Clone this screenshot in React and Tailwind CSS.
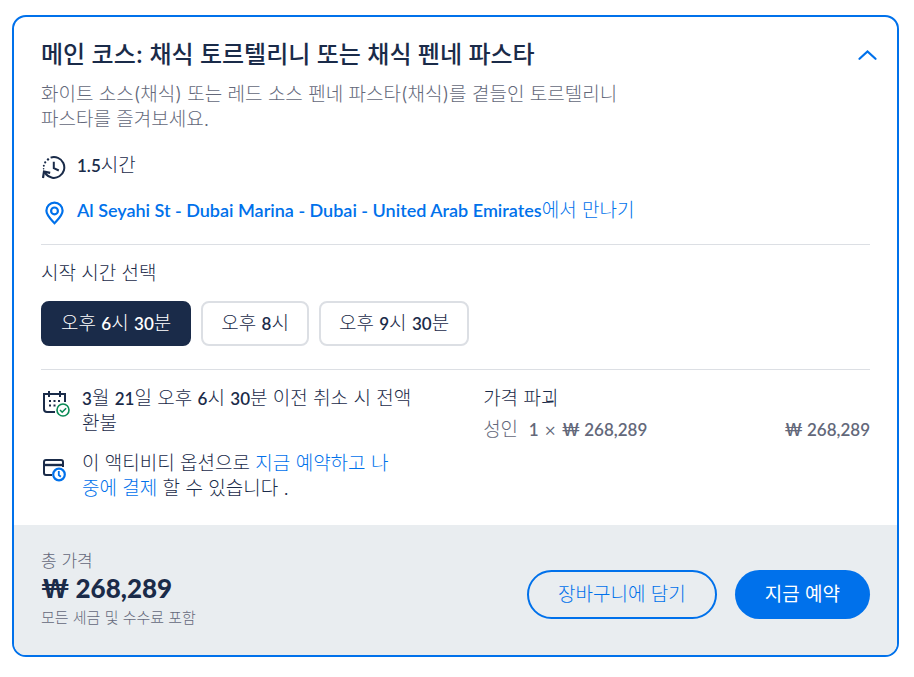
import React, { useState } from "react";

const startTimes = [
  { id: "1830", parts: ["오후 ", "6", "시 ", "30", "분"] },
  { id: "2000", parts: ["오후 ", "8", "시"] },
  { id: "2130", parts: ["오후 ", "9", "시 ", "30", "분"] }
];

function Num({ children }) {
  return <span className="font-['Lato','Noto_Sans_CJK_KR',sans-serif] text-[17px] font-semibold">{children}</span>;
}

function DurationIcon() {
  return (
    <svg width="25" height="25" viewBox="0 0 25 25" fill="none" stroke="#1a2b49" strokeWidth="2" className="mt-0.5 shrink-0" aria-hidden="true">
      <path d="M9.6 2.6A10.4 10.4 0 1 1 4.8 19" />
      <path d="M12.8 6.800v6.400l5 2.300" />
      <path d="M2 23l1-6.400 6.200 1.300" strokeWidth="2.200" />
      <path d="M3 16.800l2.600 2.800" />
      <g fill="#1a2b49" stroke="none">
        <circle cx="7" cy="4.400" r="1.200" />
        <circle cx="4.200" cy="7.400" r="1.100" />
        <circle cx="2.800" cy="10.800" r="1" />
        <circle cx="2.600" cy="13.800" r=".8" />
      </g>
    </svg>
  );
}

function PinIcon() {
  return (
    <svg width="25" height="25" viewBox="0 0 25 25" fill="none" stroke="#0071eb" strokeWidth="2.200" className="mt-0.5 shrink-0" aria-hidden="true">
      <path d="M13.500 23.200C10 19.400 5.400 15.200 5.400 10.700a8.100 8.100 0 0 1 16.200 0C21.600 15.200 17 19.400 13.500 23.200Z" />
      <circle cx="13.500" cy="10.900" r="3.400" />
    </svg>
  );
}

function CalendarIcon() {
  return (
    <svg width="29" height="28" viewBox="0 0 29 28" fill="none" stroke="#1a2b49" strokeWidth="2" className="mt-1 shrink-0" aria-hidden="true">
      <path d="M14 22H6a3 3 0 0 1-3-3V4h21v8" />
      <path d="M8 1v6M19 1v6" />
      <g fill="#1a2b49" stroke="none">
        <path d="M8 10h2v2H8zM12.500 10h2v2h-2zM17 10h2v2h-2zM8 14.500h2v2H8zM12.500 14.500h2v2h-2z" />
      </g>
      <circle cx="22" cy="20" r="6" stroke="#0a8a55" strokeWidth="1.600" />
      <path d="M19 20l2.200 2.200 3.900-4" stroke="#0a8a55" strokeWidth="1.600" />
    </svg>
  );
}

function PayLaterIcon() {
  return (
    <svg width="29" height="28" viewBox="0 0 29 28" fill="none" stroke="#1a2b49" strokeWidth="2" className="mt-1.5 shrink-0" aria-hidden="true">
      <path d="M11 18H5a2 2 0 0 1-2-2V5a2 2 0 0 1 2-2h15a2 2 0 0 1 2 2v5" />
      <path d="M3 8h19" strokeWidth="2.400" />
      <circle cx="18" cy="17.500" r="5.800" stroke="#0071eb" strokeWidth="2.200" />
      <path d="M17.800 14v4l2 1.700" stroke="#0071eb" strokeWidth="1.800" />
    </svg>
  );
}

export default function App() {
  const [selected, setSelected] = useState("1830");
  const [open, setOpen] = useState(true);

  return (
    <main className="min-h-screen bg-white pt-[15px] pr-[15px] pl-3 font-['Inter','Noto_Sans_CJK_KR',sans-serif] text-[19px] leading-[25px] font-light text-[#1a2b49]">
      <article className="overflow-hidden rounded-[14px] border-2 border-[#0071eb]">
        <div className="px-[27px] pt-[23px] pb-6">
          <header className="flex items-start justify-between">
            <div>
              <h2 className="text-2xl leading-[30px] font-medium">메인 코스: 채식 토르텔리니 또는 채식 펜네 파스타</h2>
              <p className="mt-3 max-w-[600px] break-keep text-[#63687a]">
                화이트 소스(채식) 또는 레드 소스 펜네 파스타(채식)를 곁들인 토르텔리니 파스타를 즐겨보세요.
              </p>
            </div>
            <button type="button" aria-label="옵션 접기" aria-expanded={open} onClick={() => setOpen(!open)} className="-mr-2 grid h-[30px] w-[22px] place-items-center text-[#0071eb]">
              <svg width="20" height="12" viewBox="0 0 20 12" fill="none" stroke="currentColor" strokeWidth="2.200" strokeLinecap="round" aria-hidden="true">
                <path d="M2.500 9.800l8-7.300 8 7.300" />
              </svg>
            </button>
          </header>

          <div className="mt-[21px] flex items-start gap-[11px]">
            <DurationIcon />
            <p><Num>1.5</Num>시간</p>
          </div>
          <div className="mt-[18px] flex items-start gap-[11px]">
            <PinIcon />
            <a href="#meeting-point" className="text-[#0071eb]">
              <span className="font-['Lato',sans-serif] text-lg leading-[25px] font-semibold">Al Seyahi St - Dubai Marina - Dubai - United Arab Emirates</span>에서 만나기
            </a>
          </div>

          <section className="mt-[19px] border-t border-[#dcdfe4] pt-4">
            <h3>시작 시간 선택</h3>
            <div className="mt-[15px] flex gap-2.5">
              {startTimes.map((time) => (
                <button
                  key={time.id}
                  type="button"
                  aria-pressed={selected === time.id}
                  onClick={() => setSelected(time.id)}
                  className={`h-[45px] rounded-lg border-2 px-[18px] ${
                    selected === time.id ? "border-[#1a2b49] bg-[#1a2b49] text-white" : "border-[#dcdfe4] bg-white"
                  }`}
                >
                  {time.parts.map((part, i) => (i % 2 ? <Num key={i}>{part}</Num> : part))}
                </button>
              ))}
            </div>
          </section>

          <section className="mt-[23px] grid grid-cols-[8fr_7fr] border-t border-[#dcdfe4] pt-4">
            <div className="flex max-w-[380px] flex-col gap-[15px]">
              <div className="flex items-start gap-3">
                <CalendarIcon />
                <p><Num>3</Num>월 <Num>21</Num>일 오후 <Num>6</Num>시 <Num>30</Num>분 이전 취소 시 전액 환불</p>
              </div>
              <div className="flex items-start gap-3">
                <PayLaterIcon />
                <p className="max-w-[320px]">
                  이 액티비티 옵션으로 <a href="#pay-later" className="text-[#0071eb]">지금 예약하고 나중에 결제</a> 할 수 있습니다 .
                </p>
              </div>
            </div>
            <div>
              <h3>가격 파괴</h3>
              <div className="mt-1.5 flex justify-between text-[#63687a]">
                <span>성인 &nbsp;<Num>1</Num> × <Num>₩ 268,289</Num></span>
                <Num>₩ 268,289</Num>
              </div>
            </div>
          </section>
        </div>

        <footer className="flex items-center justify-between bg-[#e9edf0] px-[27px] pt-[26px] pb-6">
          <div>
            <p className="text-[17px] leading-5 text-[#63687a]">총 가격</p>
            <p className="font-['Lato','Noto_Sans_CJK_KR',sans-serif] text-[26px] leading-[34px] font-black">₩ 268,289</p>
            <p className="text-[15px] leading-[26px] text-[#63687a]">모든 세금 및 수수료 포함</p>
          </div>
          <div className="flex gap-[18px] pt-1.5">
            <button type="button" className="h-[49px] rounded-full border-2 border-[#0071eb] px-[29px] text-[#0071eb]">장바구니에 담기</button>
            <button type="button" className="h-[49px] rounded-full bg-[#0071eb] px-[30px] font-normal text-white">지금 예약</button>
          </div>
        </footer>
      </article>
    </main>
  );
}
